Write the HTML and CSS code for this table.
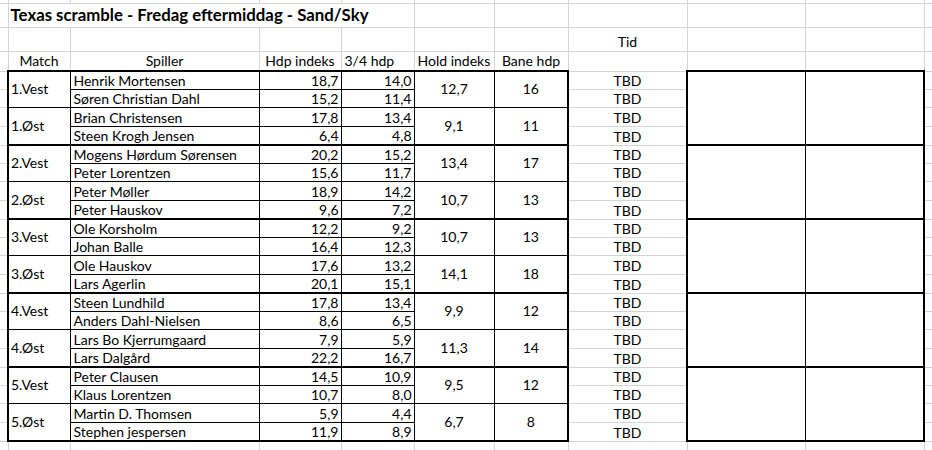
FILE: index.html
```html
<!DOCTYPE html>
<html lang="da">
<head>
<meta charset="utf-8">
<title>Texas scramble - Fredag eftermiddag - Sand/Sky</title>
<link rel="stylesheet" href="styles.css">
</head>
<body>
<table class="sheet">
  <colgroup>
    <col class="w-edge"><col class="w-a"><col class="w-b"><col class="w-c"><col class="w-d"><col class="w-e"><col class="w-f"><col class="w-g"><col class="w-h"><col class="w-i"><col class="w-z">
  </colgroup>
  <tr class="r-top"><td class="e"></td><td></td><td></td><td></td><td></td><td></td><td></td><td></td><td></td><td></td><td class="z"></td></tr>
  <tr class="r-title"><td class="e"></td><td class="title" colspan="4">Texas scramble - Fredag eftermiddag - Sand/Sky</td><td></td><td></td><td></td><td></td><td></td><td class="z"></td></tr>
  <tr class="r-title"><td class="e"></td><td></td><td></td><td></td><td></td><td></td><td></td><td class="ctr">Tid</td><td></td><td></td><td class="z"></td></tr>
  <tr class="r-hdr"><td class="e"></td><td class="ctr">Match</td><td class="ctr">Spiller</td><td class="ctr">Hdp indeks</td><td>3/4 hdp</td><td>Hold indeks</td><td class="ctr">Bane hdp</td><td></td><td></td><td></td><td class="z"></td></tr>

  <tr class="d bs"><td class="e"></td><td class="m" rowspan="2">1.Vest</td><td class="n">Henrik Mortensen</td><td class="num">18,7</td><td class="num">14,0</td><td class="c" rowspan="2">12,7</td><td class="c f" rowspan="2">16</td><td class="t">TBD</td><td class="bx bh" rowspan="4"></td><td class="bx bi" rowspan="4"></td><td class="z"></td></tr>
  <tr class="d"><td class="e"></td><td class="n">Søren Christian Dahl</td><td class="num">15,2</td><td class="num">11,4</td><td class="t">TBD</td><td class="z"></td></tr>
  <tr class="d p2"><td class="e"></td><td class="m" rowspan="2">1.Øst</td><td class="n">Brian Christensen</td><td class="num">17,8</td><td class="num">13,4</td><td class="c" rowspan="2">9,1</td><td class="c f" rowspan="2">11</td><td class="t">TBD</td><td class="z"></td></tr>
  <tr class="d be"><td class="e"></td><td class="n">Steen Krogh Jensen</td><td class="num">6,4</td><td class="num">4,8</td><td class="t">TBD</td><td class="z"></td></tr>

  <tr class="d bs"><td class="e"></td><td class="m" rowspan="2">2.Vest</td><td class="n">Mogens Hørdum Sørensen</td><td class="num">20,2</td><td class="num">15,2</td><td class="c" rowspan="2">13,4</td><td class="c f" rowspan="2">17</td><td class="t">TBD</td><td class="bx bh" rowspan="4"></td><td class="bx bi" rowspan="4"></td><td class="z"></td></tr>
  <tr class="d"><td class="e"></td><td class="n">Peter Lorentzen</td><td class="num">15,6</td><td class="num">11,7</td><td class="t">TBD</td><td class="z"></td></tr>
  <tr class="d p2"><td class="e"></td><td class="m" rowspan="2">2.Øst</td><td class="n">Peter Møller</td><td class="num">18,9</td><td class="num">14,2</td><td class="c" rowspan="2">10,7</td><td class="c f" rowspan="2">13</td><td class="t">TBD</td><td class="z"></td></tr>
  <tr class="d be"><td class="e"></td><td class="n">Peter Hauskov</td><td class="num">9,6</td><td class="num">7,2</td><td class="t">TBD</td><td class="z"></td></tr>

  <tr class="d bs"><td class="e"></td><td class="m" rowspan="2">3.Vest</td><td class="n">Ole Korsholm</td><td class="num">12,2</td><td class="num">9,2</td><td class="c" rowspan="2">10,7</td><td class="c f" rowspan="2">13</td><td class="t">TBD</td><td class="bx bh" rowspan="4"></td><td class="bx bi" rowspan="4"></td><td class="z"></td></tr>
  <tr class="d"><td class="e"></td><td class="n">Johan Balle</td><td class="num">16,4</td><td class="num">12,3</td><td class="t">TBD</td><td class="z"></td></tr>
  <tr class="d p2"><td class="e"></td><td class="m" rowspan="2">3.Øst</td><td class="n">Ole Hauskov</td><td class="num">17,6</td><td class="num">13,2</td><td class="c" rowspan="2">14,1</td><td class="c f" rowspan="2">18</td><td class="t">TBD</td><td class="z"></td></tr>
  <tr class="d be"><td class="e"></td><td class="n">Lars Agerlin</td><td class="num">20,1</td><td class="num">15,1</td><td class="t">TBD</td><td class="z"></td></tr>

  <tr class="d bs"><td class="e"></td><td class="m" rowspan="2">4.Vest</td><td class="n">Steen Lundhild</td><td class="num">17,8</td><td class="num">13,4</td><td class="c" rowspan="2">9,9</td><td class="c f" rowspan="2">12</td><td class="t">TBD</td><td class="bx bh" rowspan="4"></td><td class="bx bi" rowspan="4"></td><td class="z"></td></tr>
  <tr class="d"><td class="e"></td><td class="n">Anders Dahl-Nielsen</td><td class="num">8,6</td><td class="num">6,5</td><td class="t">TBD</td><td class="z"></td></tr>
  <tr class="d p2"><td class="e"></td><td class="m" rowspan="2">4.Øst</td><td class="n">Lars Bo Kjerrumgaard</td><td class="num">7,9</td><td class="num">5,9</td><td class="c" rowspan="2">11,3</td><td class="c f" rowspan="2">14</td><td class="t">TBD</td><td class="z"></td></tr>
  <tr class="d be"><td class="e"></td><td class="n">Lars Dalgård</td><td class="num">22,2</td><td class="num">16,7</td><td class="t">TBD</td><td class="z"></td></tr>

  <tr class="d bs"><td class="e"></td><td class="m" rowspan="2">5.Vest</td><td class="n">Peter Clausen</td><td class="num">14,5</td><td class="num">10,9</td><td class="c" rowspan="2">9,5</td><td class="c f" rowspan="2">12</td><td class="t">TBD</td><td class="bx bh" rowspan="4"></td><td class="bx bi" rowspan="4"></td><td class="z"></td></tr>
  <tr class="d"><td class="e"></td><td class="n">Klaus Lorentzen</td><td class="num">10,7</td><td class="num">8,0</td><td class="t">TBD</td><td class="z"></td></tr>
  <tr class="d p2"><td class="e"></td><td class="m" rowspan="2">5.Øst</td><td class="n">Martin D. Thomsen</td><td class="num">5,9</td><td class="num">4,4</td><td class="c" rowspan="2">6,7</td><td class="c f" rowspan="2">8</td><td class="t">TBD</td><td class="z"></td></tr>
  <tr class="d be"><td class="e"></td><td class="n">Stephen jespersen</td><td class="num">11,9</td><td class="num">8,9</td><td class="t">TBD</td><td class="z"></td></tr>

  <tr class="r-end"><td class="e"></td><td></td><td></td><td></td><td></td><td></td><td></td><td></td><td></td><td></td><td class="z"></td></tr>
</table>
</body>
</html>
```

FILE: styles.css
```css
html, body {
  margin: 0;
  padding: 0;
  background: #ffffff;
  overflow: hidden;
}

.sheet {
  border-collapse: collapse;
  table-layout: fixed;
  width: 932px;
  font-family: Lato, "Liberation Sans", sans-serif;
  font-size: 14px;
  color: #000000;
}

.w-edge { width: 8px; }
.w-a { width: 62px; }
.w-b { width: 189px; }
.w-c { width: 82px; }
.w-d { width: 73px; }
.w-e { width: 80px; }
.w-f { width: 74px; }
.w-g { width: 119px; }
.w-h { width: 118px; }
.w-i { width: 119px; }
.w-z { width: 8px; }

.sheet td {
  border: 1px solid #d4d4d4;
  padding: 0 3px 1px;
  vertical-align: bottom;
  white-space: nowrap;
  overflow: hidden;
  line-height: 16px;
}

.d td { padding-bottom: 0; }

.r-top { height: 3px; }
.r-top td { border-top: 0; padding: 0; line-height: 0; }
.r-title { height: 24px; }
.r-hdr { height: 20px; }
.d { height: 18px; }
.d.p2, .d.be { height: 19px; }
.r-end { height: 12px; }

.sheet td.e { border-left: 0; padding: 0; }
.sheet td.z { border-right: 0; padding: 0; }

.sheet td.title {
  font-weight: bold;
  font-size: 16.8px;
  padding: 0 2px 4px;
  overflow: visible;
}

.sheet td.ctr { text-align: center; }

.sheet td.m,
.sheet td.n,
.sheet td.num,
.sheet td.c {
  border: 1px solid #000000;
}

.sheet td.m {
  border-left-width: 2px;
  vertical-align: middle;
  padding: 0 0 0 2px;
}

.sheet td.num {
  text-align: right;
  padding-right: 2px;
}

.sheet td.c {
  text-align: center;
  vertical-align: middle;
  padding-bottom: 0;
}

.sheet td.f { border-right-width: 2px; }

.bs td.m, .bs td.n, .bs td.num, .bs td.c { border-top-width: 2px; }
.be td.n, .be td.num, .p2 td.m, .p2 td.c { border-bottom-width: 2px; }

.sheet td.t { text-align: center; }

.sheet td.bx {
  border: 2px solid #000000;
  padding: 0;
}
.sheet td.bh { border-right-width: 1px; }
.sheet td.bi { border-left-width: 1px; }
```
